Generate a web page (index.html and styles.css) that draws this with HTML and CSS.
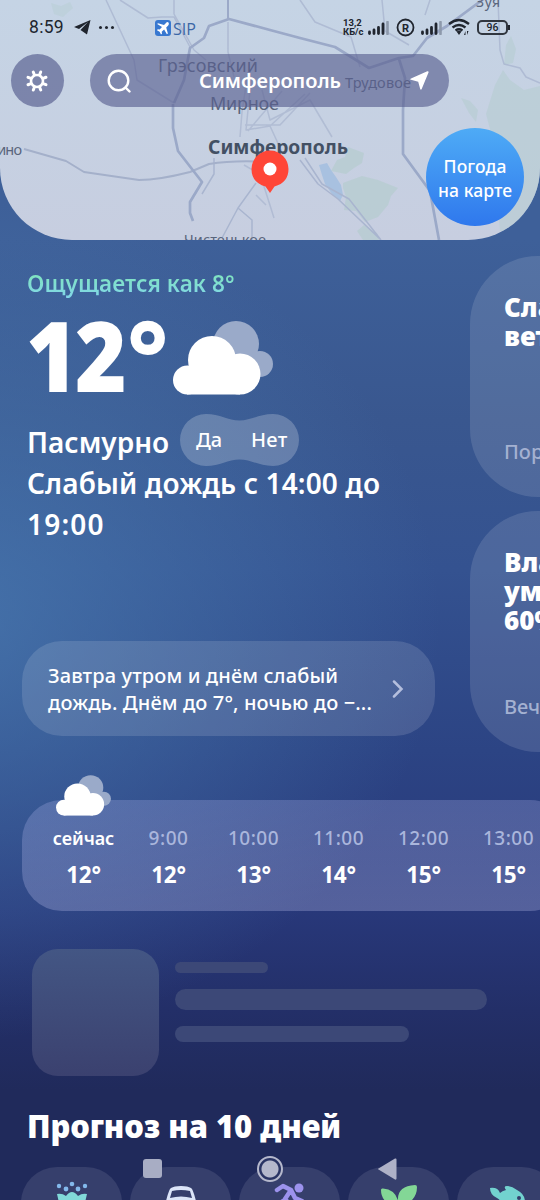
FILE: index.html
```html
<!DOCTYPE html>
<html lang="ru">
<head>
<meta charset="utf-8">
<title>Погода — Симферополь</title>
<link rel="stylesheet" href="styles.css">
</head>
<body>
<svg width="0" height="0" class="defs">
  <defs>
    <symbol id="cloud" viewBox="0 0 100 74">
      <circle cx="63" cy="23" r="23" fill="#9aaac9"/><circle cx="87" cy="43" r="13" fill="#9aaac9"/>
      <circle cx="39" cy="39" r="24" fill="#fff"/><circle cx="67" cy="53" r="20.500" fill="#fff"/>
      <circle cx="14.500" cy="59" r="14.500" fill="#fff"/><path d="M14 73.500h53V50H14z" fill="#fff"/>
    </symbol>
    <symbol id="signal" viewBox="0 0 21 14">
      <path d="M1.500 11v1.500M6 9v3.500M10.500 6.500v6M15 3v9.500" stroke="#20252e" stroke-width="2.800" stroke-linecap="round"/>
      <path d="M19.500 1v12" stroke="#8d99ab" stroke-width="2.600" stroke-linecap="round"/>
    </symbol>
  </defs>
</svg>
<div class="screen">
  <header class="map">
    <svg class="map-art" width="540" height="240" viewBox="0 0 540 240">
      <defs><linearGradient id="land" x2="0" y2="1"><stop stop-color="#c5d4e5"/><stop offset="1" stop-color="#c7cee0"/></linearGradient></defs>
      <path fill="url(#land)" d="M0 0h540v240H0z"/>
      <g fill="#b5cccf">
        <path opacity=".4" d="M51 3l10 3 9-4 3 6-10 9-9-3z"/>
        <path d="M506 45l5-9 5 13-3 14-9 2zM495 85l8-15 7 10 14 10 16-4v145h-40l-8-94-6-23zM461 98l9 3 8 9-2 12-7-9z" opacity=".55"/>
        <path d="M331 171l6-11 8-3 3-10 16 6-2 10-8 5-8 6zM343 183l19-7 16 4 20 8-7 8-3 9-10 12-13 5-9-11-12-1 2-13-3-9zM357 231l7-6 13 8 2 7h-16z" opacity=".7"/>
      </g>
      <path d="M319 165l8-2 4 7 5 7 5 8 2 10-3 6-8-7-7-10-3-9z" fill="#a8c1e0"/>
      <g fill="none" stroke="#a9b5cf" stroke-width="1.500" stroke-linejoin="round">
        <path opacity=".8" d="M120 0l28 18 14-1 12 0 16 30M106 0l28 60 3 20 37 23M174 0v14l20 36 12 10M228 22v30l6 25M300 0l15 22 36 15 9 30M382 0l3 31 24 14M425 15l5-15M498 0l2 50 4 14 16 4 6 9 14 6"/>
        <path d="M214 158v16l-12 20M256 183l-18 25-16 30M238 208l14 12v20"/>
        <path opacity=".75" d="M248 72l-6 40-2 25M250 90l-4 40 24-4 12 26M262 90l8 30 40-20 22 37M282 91l-34 40M270 126l35-32M245 125h35l30-32M244 165l14 8 20-20M256 195l10 10M262 180l12 38"/>
        <path d="M300 160l18 24 20 15 43 41M305 158l17 26 27 15 32 41"/>
      </g>
      <g fill="none" stroke="#9ba9c8" stroke-linejoin="round">
        <path stroke="#a4b0ca" stroke-width="2" d="M24 149l42 12 18 11 55 8q20 0 51-8l19-8q25-4 60-2"/>
        <path stroke-width="2.700" d="M173 104v24l5 23 24 31-12 20v11l3 8M174 103l10-23 6-32 14-10 5-12 20-7 41 11 30 8 35 9 34 21 30-10 14-2 14-18 20-12 46-34M399 59l6 19-2 32v44l27 37 9 49"/>
        <path stroke-width="2" d="M228 0v20"/>
      </g>
      <g class="map-label">
        <text x="158" y="72" font-size="18" textLength="100">Грэсовский</text>
        <text x="210" y="110" font-size="18" textLength="69">Мирное</text>
        <text x="-15" y="155" font-size="14.500" textLength="37">шино</text>
        <text x="184" y="245" font-size="14.500" textLength="82">Чистенькое</text>
        <text x="476" y="7" font-size="14" textLength="24">Зуя</text>
        <text x="345" y="88" font-size="14.500" textLength="66">Трудовое</text>
        <text class="map-city" x="208" y="154" font-size="19" textLength="140" lengthAdjust="spacingAndGlyphs">Симферополь</text>
      </g>
      <rect x="155" y="20" width="16" height="16" rx="3" fill="#3878d0"/>
      <path fill="#fff" d="M168.500 22.500q-1.300-1-2.500.4l-2 2-6-1.700-.8.900 4.800 3-2.300 2.500-2-.3-.7.900 2.600 1.600 1.400 2.600 1-.7-.3-2 2.400-2.200 2.800 4.700 1-.8-1.700-6 2-2q1.300-1.600.3-2.900z"/>
      <text class="airport" x="173" y="34.500" textLength="23" lengthAdjust="spacingAndGlyphs">SIP</text>
      <path fill="#ff4637" d="M270 193l-4.500-6.500q-14-4-14-17.500a18.500 18.500 0 0 1 37 0q0 13.500-14 17.500z"/>
      <circle cx="270" cy="169" r="6.500" fill="#fff"/>
    </svg>
    <div class="status">
      <span class="clock">8:59</span>
      <svg class="telegram" width="17" height="15" viewBox="0 0 17 15"><path fill="#20252e" d="M16.500 0L0 7l5 2 9-7-7.500 8 6.500 4.500z"/></svg>
      <span class="dots"><i></i><i></i><i></i></span>
      <span class="speed">13,2<br>КБ/с</span>
      <svg class="sig1" width="21" height="14"><use href="#signal"/></svg>
      <svg class="roaming" width="19" height="19" viewBox="0 0 19 19"><circle cx="9.500" cy="9.500" r="8" fill="none" stroke="#20252e" stroke-width="1.800"/><text x="9.500" y="13.500" text-anchor="middle">R</text></svg>
      <svg class="sig2" width="21" height="14"><use href="#signal"/></svg>
      <svg class="wifi" width="23" height="18" viewBox="0 0 23 18"><g fill="none" stroke="#20252e" stroke-width="2.300"><path d="M1 6q10-8 20 0M4.500 9.500q6.500-5 13 0M7.500 12.500q3.500-2.500 7 0"/></g><path fill="#20252e" d="M8.500 13.500q2.500-1.500 5 0L11 17zM16 17l1.500-4v4zM19 13v4l1.500-4z"/></svg>
      <span class="battery">96</span>
    </div>
    <div class="toolbar">
      <button class="settings" aria-label="Настройки"><svg width="22" height="22" viewBox="-11 -11 22 22"><circle r="6" fill="none" stroke="#fff" stroke-width="2.600"/><g stroke="#fff" stroke-width="3" stroke-linecap="round"><path id="tooth" d="M2.800-6.800l.9-2.200"/><use href="#tooth" transform="rotate(45)"/><use href="#tooth" transform="rotate(90)"/><use href="#tooth" transform="rotate(135)"/><use href="#tooth" transform="rotate(180)"/><use href="#tooth" transform="rotate(225)"/><use href="#tooth" transform="rotate(270)"/><use href="#tooth" transform="rotate(315)"/></g></svg></button>
      <div class="search">
        <svg width="24" height="24" viewBox="0 0 24 24"><g fill="none" stroke="#fff" stroke-width="2.400" stroke-linecap="round"><circle cx="11.500" cy="11.500" r="9.800"/><path d="M18.500 18.500l4 4"/></g></svg>
        <span class="city">Симферополь</span>
        <svg class="arrow" width="19" height="19" viewBox="0 0 19 19"><path fill="#fff" d="M17.300.2L1 7.400q-1.700.8 0 1.400l7.200 2 2 7.200q.7 1.600 1.500 0L18.500 1.500Q19 0 17.300.2z"/></svg>
      </div>
    </div>
    <div class="on-map">Погода<br>на карте</div>
  </header>

  <main class="today">
    <section class="now">
      <div class="feels">Ощущается как 8°</div>
      <div class="temperature"><span class="value">12</span><span class="degree">°</span><svg class="cloud-big" width="100" height="74"><use href="#cloud"/></svg></div>
      <div class="condition"><span class="overcast">Пасмурно</span>
        <div class="vote"><svg width="119" height="52" viewBox="0 0 119 52"><path fill="#fff" fill-opacity=".22" d="M26 0C40 0 48 6.500 59.500 6.500S79 0 93 0a26 26 0 0 1 0 52C79 52 71 45.500 59.500 45.500S40 52 26 52a26 26 0 0 1 0-52z"/></svg><span class="yes">Да</span><span class="no">Нет</span></div>
      </div>
      <div class="rain"><span class="rain-a">Слабый дождь с 14:00 до</span><br><span class="rain-b">19:00</span></div>
      <div class="tomorrow">
        <div><span class="tm-a">Завтра утром и днём слабый</span><br><span class="tm-b">дождь. Днём до 7°, ночью до −...</span></div>
        <svg width="12" height="18" viewBox="0 0 12 18"><path d="M2 1.500L9.500 9 2 16.500" fill="none" stroke="#b4bedd" stroke-width="2.500" stroke-linecap="round"/></svg>
      </div>
    </section>
    <aside class="facts">
      <div class="fact"><b>Слабый<br>ветер</b><span>Порывы</span></div>
      <div class="fact"><b>Влажность<br>умеренная<br>60%</b><span>Вечером</span></div>
    </aside>
  </main>

  <section class="hours">
    <svg class="cloud-small" width="55" height="41"><use href="#cloud"/></svg>
    <div class="hour current"><span>сейчас</span><b>12°</b></div>
    <div class="hour"><span>9:00</span><b>12°</b></div>
    <div class="hour"><span>10:00</span><b>13°</b></div>
    <div class="hour"><span>11:00</span><b>14°</b></div>
    <div class="hour"><span>12:00</span><b>15°</b></div>
    <div class="hour"><span>13:00</span><b>15°</b></div>
  </section>

  <section class="loading"><div class="thumb"></div><div class="lines"><i class="line-a"></i><i class="line-b"></i><i class="line-c"></i></div></section>

  <h2><span>Прогноз на 10 дней</span></h2>
  <nav class="tabs">
    <div class="tab"><svg width="32" height="26" viewBox="0 0 32 26"><g fill="#83b9ec"><circle cx="3" cy="5" r="2.200"/><circle cx="10" cy="8" r="2.400"/><circle cx="16" cy="3" r="2.300"/><circle cx="22" cy="8" r="2.400"/><circle cx="29" cy="5" r="2.200"/></g><path fill="#81d9d8" d="M1 13q5-1 9 2 3-4 6-4t6 4q4-3 9-2l-3 13H4z"/></svg></div>
    <div class="tab"><svg width="36" height="26" viewBox="0 0 36 26"><path fill="#dce5f8" fill-rule="evenodd" d="M3 20Q6 8 8 7q3-2 10-2t10 2q2 1 5 13v6H3zM7 17q11-3 22 0l-2-7q-9-2-18 0z"/></svg></div>
    <div class="tab"><svg width="36" height="26" viewBox="-1 0 36 26"><circle cx="26" cy="7" r="4.500" fill="#9c92ed"/><path d="M4 9l6-4 8 4-6 9 7 8M18 9l4 8 7 3M10 20l-8 6" fill="none" stroke="#9c92ed" stroke-width="4.500" stroke-linecap="round" stroke-linejoin="round"/></svg></div>
    <div class="tab"><svg width="38" height="26" viewBox="0 0 38 26"><path fill="#83d796" d="M17 26Q1 22 1 9q0-2 2-1.500 12 1 15 12Q17 5 35 4q2 0 2 2 0 15-18 20z"/></svg></div>
    <div class="tab"><svg width="38" height="26" viewBox="0 0 38 26"><path fill="#72d2cf" d="M1 7q8-1 10 5 2-2 6-3-3-4 1-4 5 0 10 4 8 4 8 12v5H10q4-6-2-9-7-3-7-10z"/><circle cx="30" cy="17" r="2" fill="#343d6b"/></svg></div>
  </nav>
  <div class="system-nav"><i class="recent"></i><i class="home"></i><svg width="19" height="22" viewBox="0 0 19 22"><path fill="#aeb1c7" d="M17 .5q1.500-.5 1.500 1v19q0 1.500-1.500 1L.5 11.500q-1-.5 0-1z"/></svg></div>
</div>
</body>
</html>
```

FILE: styles.css
```css
* { box-sizing: border-box; }
body { margin: 0; font-family: "Noto Sans", "Open Sans", sans-serif; color: #fff; }
svg { display: block; flex: none; }
.defs { position: absolute; }
.screen {
  position: relative; width: 540px; height: 1200px; overflow: hidden;
  background:
    radial-gradient(ellipse 480px 420px at -40px 620px, rgba(74, 124, 178, .75), rgba(65, 115, 172, 0)),
    linear-gradient(#3e6099 240px, #39578f 420px, #345290 570px, #2c4484 750px, #28387a 910px, #232f68 1010px, #202a5b 1090px);
}
.map { position: relative; height: 240px; overflow: hidden; border-radius: 0 0 72px 72px; }
.map-art { position: absolute; inset: 0; }
.map-label { fill: #59657c; }
.map-city { fill: #435064; font-weight: 700; }
.airport { fill: #3c67a6; font-family: "Open Sans", sans-serif; font-size: 15.500px; font-weight: 500; }
.status { position: relative; height: 54px; padding: 0 30px 0 29px; display: flex; align-items: center; color: #20252e; }
.clock { font: 400 17.500px/20px Roboto, sans-serif; width: 45px; letter-spacing: .3px; }
.dots { display: flex; gap: 3px; margin: 0 229px 0 8px; }
.dots i { width: 3px; height: 3px; border-radius: 50%; background: #20252e; }
.speed { font: 700 9.500px/9px Roboto, sans-serif; width: 25px; white-space: nowrap; }
.sig1 { margin-top: 1px; }
.roaming { margin-left: 7px; }
.roaming text { font: 700 11px Roboto, sans-serif; fill: #20252e; }
.sig2 { margin: 1px 0 0 6px; }
.wifi { margin-left: 6px; }
.battery { position: relative; margin-left: 6px; width: 31px; height: 15px; border: 2px solid #30363f; border-radius: 5px; font: 500 10.500px/12px Roboto, sans-serif; text-align: center; flex: none; }
.battery::after { content: ""; position: absolute; right: -4px; top: 3px; width: 2px; height: 5px; background: #20252e; }
.toolbar { position: relative; display: flex; gap: 26px; padding-left: 11px; }
.settings { width: 53px; height: 53px; border: 0; border-radius: 50%; padding: 0 1px 0 0; background: rgba(89, 96, 144, .68); display: grid; place-items: center; }
.search { width: 359px; height: 53px; border-radius: 27px; background: rgba(89, 96, 144, .64); display: flex; align-items: center; padding: 0 20px 0 17px; }
.city { margin-left: 68px; font-size: 20px; font-weight: 600; letter-spacing: -.05px; width: 142px; white-space: nowrap; }
.arrow { margin-left: 69px; }
.on-map { position: absolute; right: 16px; top: 128px; width: 98px; height: 98px; border-radius: 50%; background: linear-gradient(#4eabf6, #2f78ed); font-size: 17.500px; font-weight: 500; letter-spacing: .1px; line-height: 24px; padding-top: 26px; text-align: center; white-space: nowrap; }
.today { display: grid; grid-template-columns: 470px 70px; height: 560px; }
.now { padding-left: 27px; white-space: nowrap; }
.feels { margin-top: 28px; height: 33px; line-height: 32px; font-size: 22.500px; letter-spacing: .12px; font-weight: 600; color: transparent; background: linear-gradient(#7fe8b4, #82d4ef); background-clip: text; width: max-content; }
.temperature { height: 113px; display: flex; padding-top: 18px; }
.value { width: 100px; font-size: 97px; font-weight: 900; line-height: 70px; letter-spacing: -3px; transform: translateX(-1px) scaleX(.91); transform-origin: 0 0; }
.degree { width: 46px; font-size: 98px; line-height: 70px; font-weight: 800; }
.cloud-big { margin-top: 2px; }
.condition { display: flex; height: 52px; align-items: center; font-size: 28px; font-weight: 600; }
.overcast { width: 153px; padding-top: 3px; }
.vote { position: relative; width: 119px; height: 52px; font-size: 20px; font-weight: 500; line-height: 52px; }
.vote span { position: absolute; top: 0; }
.yes { left: 16px; }
.no { left: 71px; letter-spacing: .3px; }
.rain { margin-top: -3px; font-size: 28px; letter-spacing: .12px; font-weight: 600; line-height: 41px; }
.rain-b { letter-spacing: 1.200px; }
.tomorrow { margin: 96px 0 0 -5px; width: 413px; height: 95px; border-radius: 40px; background: rgba(255, 255, 255, .13); display: flex; align-items: center; justify-content: space-between; padding: 0 31px 0 26px; font-size: 20px; letter-spacing: .12px; font-weight: 500; line-height: 27px; }
.facts { padding-top: 16px; display: grid; gap: 14px; align-content: start; }
.fact { width: 241px; height: 241px; border-radius: 68px; background: rgba(255, 255, 255, .12); padding: 37px 34px 30px; display: flex; flex-direction: column; justify-content: space-between; font-size: 20px; }
.fact b { font-size: 26px; line-height: 29px; font-weight: 900; }
.fact span { color: #a4b1d1; line-height: 30px; font-weight: 500; }
.hours { position: relative; margin-left: 22px; width: 548px; height: 111px; border-radius: 40px; background: linear-gradient(rgba(184, 188, 242, .25), rgba(184, 188, 232, .31)); display: flex; padding: 24px 0 0 19px; }
.cloud-small { position: absolute; left: 34px; top: -25px; }
.hour { width: 85px; flex: none; text-align: center; font-size: 19px; line-height: 28px; color: #aab6dc; font-weight: 500; letter-spacing: .5px; }
.hour span, .hour b { display: block; }
.hour b { color: #fff; font-weight: 700; font-size: 22.500px; letter-spacing: -.3px; line-height: 28px; margin-top: 9px; }
.current span { color: #fff; font-size: 18px; font-weight: 600; letter-spacing: -.1px; }
.loading { display: flex; gap: 16px; margin: 38px 0 0 32px; height: 127px; }
.thumb { width: 127px; height: 127px; border-radius: 26px; background: linear-gradient(#435684, #3b416f); }
.lines i { display: block; border-radius: 11px; background: #3c4877; }
.line-a { width: 93px; height: 11px; margin-top: 13px; }
.line-b { width: 312px; height: 21px; margin-top: 16px; }
.line-c { width: 234px; height: 16px; margin-top: 16px; }
h2 { margin: 30px 0 0 27px; font-size: 31px; line-height: 40px; font-weight: 900; letter-spacing: -.05px; white-space: nowrap; }
.tabs { display: flex; gap: 8px; margin: 21px 0 0 21px; }
.tab { width: 101px; height: 100px; flex: none; border-radius: 36px 36px 0 0; background: #363f6c; display: flex; justify-content: center; padding-top: 14px; }
.system-nav { position: absolute; left: 143px; top: 1156px; display: flex; align-items: center; height: 25px; }
.recent { width: 19px; height: 19px; border-radius: 3px; background: #a8adc4; }
.home { width: 26px; height: 26px; border: 2px solid #b5b8cc; border-radius: 50%; background: radial-gradient(circle, #b5b8cc 8px, #2a3464 9px); margin: 0 95px 0 95px; }
```
